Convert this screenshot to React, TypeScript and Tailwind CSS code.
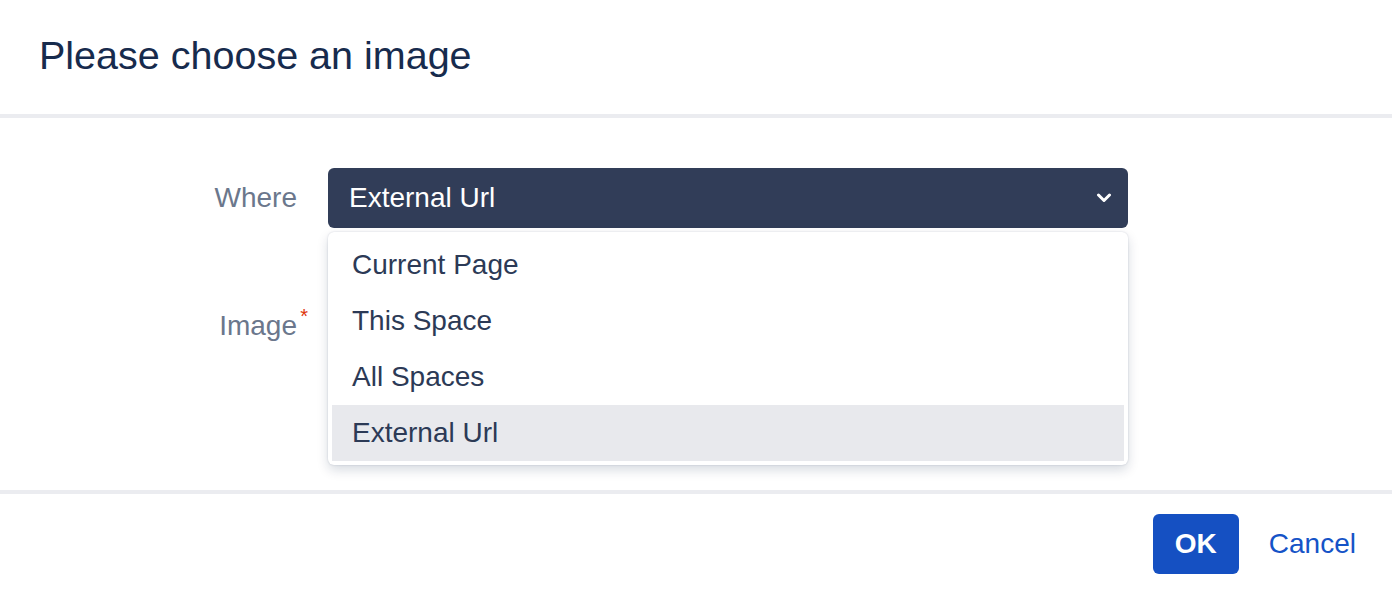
const items = ['Current Page', 'This Space', 'All Spaces', 'External Url'];

function Chevron() {
  return (
    <svg width="16" height="10" viewBox="0 0 16 10" fill="none">
      <path d="M2.5 2 L8 7.5 L13.5 2" stroke="#ffffff" strokeWidth="3" strokeLinecap="round" strokeLinejoin="round" />
    </svg>
  );
}

export default function App() {
  const selected = 'External Url';

  return (
    <div className="w-[1392px] h-[590px] bg-white font-['Liberation_Sans',Arial,sans-serif] overflow-hidden">
      {/* header */}
      <div className="h-[114px] pl-[39px] pt-[36px]">
        <h1 className="text-[39.5px] leading-[39px] text-[#172b4d]">Please choose an image</h1>
      </div>

      {/* body */}
      <div className="h-[376px] border-t-4 border-[#ebecf0] pt-[50px]">
        <div className="flex items-center h-[60px]">
          <label className="w-[297px] text-right text-[28px] text-[#6b778c]">Where</label>
          <div className="relative ml-[31px] w-[800px]">
            <button className="flex items-center justify-between w-full h-[60px] rounded-[6px] bg-[#313d58] pl-[21px] pr-[16px] text-[28px] text-white">
              <span>{selected}</span>
              <Chevron />
            </button>
            <div className="absolute left-0 top-[64px] z-10 w-full rounded-[6px] bg-white pt-[5px] pb-[4px] shadow-[0_5px_12px_rgba(9,30,66,0.16),0_0_2px_rgba(9,30,66,0.18)]">
              {items.map((item) => (
                <div
                  key={item}
                  className={`mx-[4px] flex h-[56px] items-center pl-[20px] text-[28px] text-[#2c3a56] ${
                    item === selected ? 'bg-[#e8e9ed]' : ''
                  }`}
                >
                  {item}
                </div>
              ))}
            </div>
          </div>
        </div>

        <div className="flex items-center h-[60px] mt-[68px]">
          <label className="w-[297px] text-right text-[28px] text-[#6b778c]">
            <span className="relative">
              Image
              <span className="absolute -right-[11px] -top-[9px] text-[20px] text-[#de350b]">*</span>
            </span>
          </label>
        </div>
      </div>

      {/* footer */}
      <div className="border-t-4 border-[#ebecf0] pt-[20px] pr-[36px] flex justify-end items-center gap-[30px]">
        <button className="h-[60px] w-[86px] rounded-[6px] bg-[#1550c2] text-[28px] font-bold text-white">OK</button>
        <button className="h-[60px] text-[28px] text-[#1553c7]">Cancel</button>
      </div>
    </div>
  );
}
